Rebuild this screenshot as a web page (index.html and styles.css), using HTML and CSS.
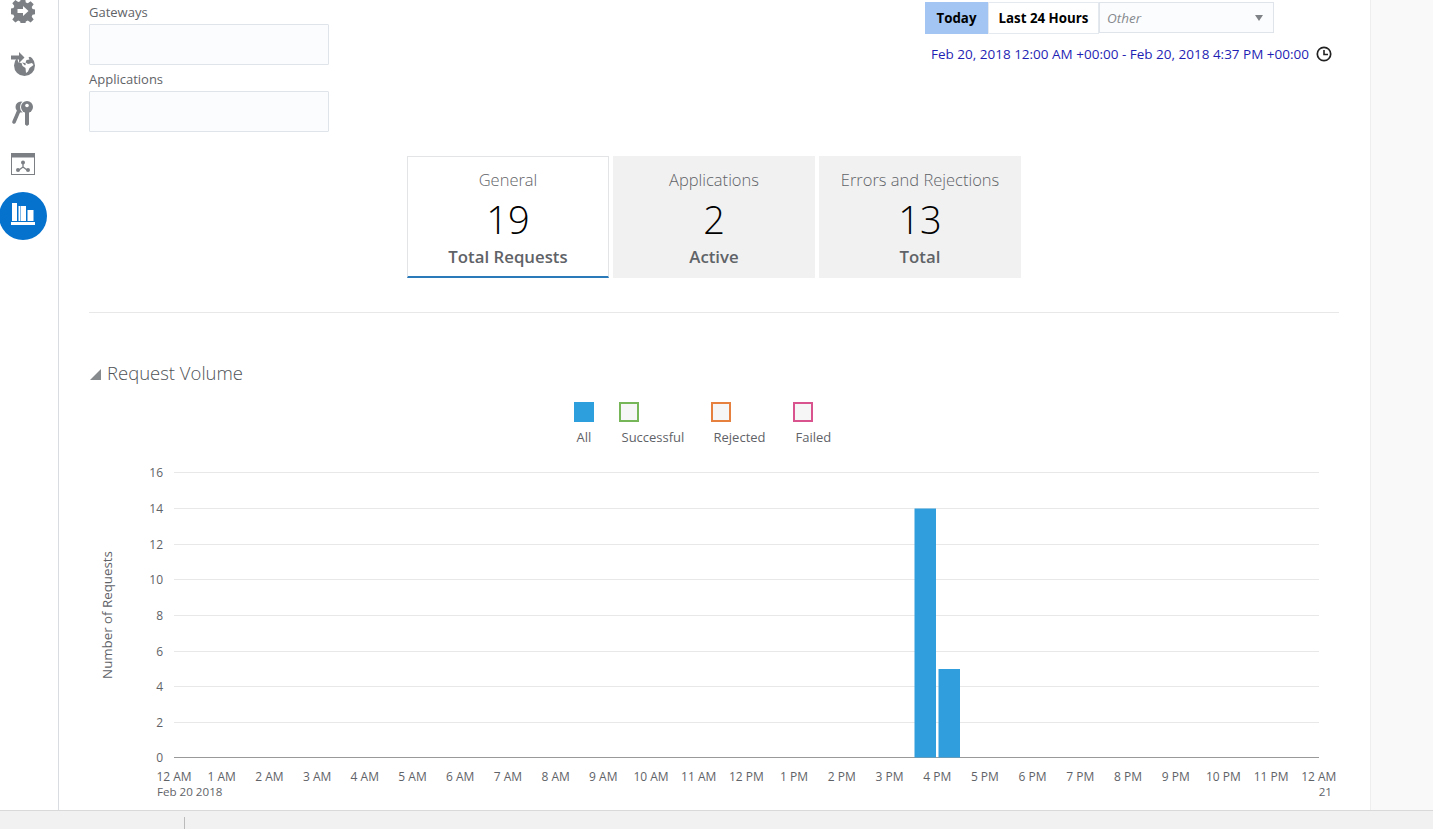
FILE: index.html
```html
<!DOCTYPE html>
<html lang="en">
<head>
    <meta charset="UTF-8">
    <meta name="viewport" content="width=device-width, initial-scale=1.0">
    <title>Analytics</title>
    <link rel="stylesheet" href="styles.css">
</head>
<body>
    <div class="shell">
        <nav class="side-nav">
            <svg class="nav-icon nav-gear" viewBox="0 0 24 24" width="24" height="24">
                <path fill="#7c8085" d="M9.800 0h4.400l.6 3.400 2 .8 2.800-2 3.100 3.100-2 2.800.8 2 3.400.6v4.400l-3.400.6-.8 2 2 2.800-3.100 3.100-2.800-2-2 .8-.6 3.400H9.800l-.6-3.400-2-.8-2.800 2-3.100-3.100 2-2.800-.8-2-3.400-.6V9.600l3.400-.6.8-2-2-2.800 3.100-3.100 2.800 2 2-.8z"/>
                <path fill="#fff" d="M6.500 10h5.500V7l5.500 5-5.500 5v-3H6.500z"/>
            </svg>
            <svg class="nav-icon nav-globe" viewBox="0 0 24 24" width="24" height="24">
                <circle cx="13.500" cy="13.500" r="10.500" fill="#7c8085"/>
                <path fill="#fff" d="M9 2h9l2 2-2.500 1.500 1 2-3 .5-1 2.500 2.500 1.500 4-1 1.500 2-4 3-1.500 3.500-2 1.500-.5-5-3-2-1-3-3-.5-1-3z"/>
                <path fill="#7c8085" d="M0 3.500h8V0l5.500 5.500L8 11V7.500H0z"/>
                <path fill="#7c8085" d="M11 10.500l3 .5 1 1-1 1.500z"/>
            </svg>
            <svg class="nav-icon nav-keys" viewBox="0 0 24 26" width="24" height="26">
                <path fill="none" stroke="#7c8085" stroke-width="3.600" stroke-linecap="round" d="M9 8 3 22"/>
                <circle cx="10" cy="7" r="5.500" fill="#7c8085"/>
                <circle cx="16" cy="7" r="7" fill="#fff"/>
                <circle cx="16" cy="7" r="6" fill="#7c8085"/>
                <circle cx="16" cy="5.500" r="1.800" fill="#fff"/>
                <path fill="#7c8085" d="M14 11h4v13.500l-2 1.500-2-1.500z"/>
            </svg>
            <svg class="nav-icon nav-app" viewBox="0 0 24 22" width="24" height="22">
                <rect x=".5" y=".5" width="23" height="21" fill="#fff" stroke="#7c8085"/>
                <rect x="0" y="0" width="24" height="4.500" fill="#7c8085"/>
                <path fill="none" stroke="#7c8085" stroke-width="1.300" d="M12 9v5M12 14l-4 3M12 14l4 3"/>
                <circle cx="12" cy="9.500" r="2" fill="#7c8085"/>
                <circle cx="7" cy="17" r="2" fill="#7c8085"/>
                <circle cx="17" cy="17" r="2" fill="#7c8085"/>
            </svg>
            <div class="nav-active">
                <svg viewBox="0 0 24 22" width="24" height="22">
                    <path fill="#fff" d="M0 19h24v3H0zM1 0h5v18H1zM7.500 3h2v15h-2zM10 3h5v15h-5zM16.500 7h6v11h-6z"/>
                </svg>
            </div>
        </nav>

        <main class="content">
            <div class="top-row">
                <div class="filters">
                    <label class="field-label">Gateways</label>
                    <div class="field-box"></div>
                    <label class="field-label">Applications</label>
                    <div class="field-box"></div>
                </div>
                <div class="range">
                    <div class="range-buttons">
                        <button class="range-btn range-btn-on">Today</button>
                        <button class="range-btn range-btn-wide">Last 24 Hours</button>
                        <div class="range-select">
                            <span>Other</span>
                            <span class="select-arrow"></span>
                        </div>
                    </div>
                    <div class="range-text">
                        <span>Feb 20, 2018 12:00 AM +00:00 - Feb 20, 2018 4:37 PM +00:00</span>
                        <svg viewBox="0 0 16 16" width="16" height="16">
                            <circle cx="8" cy="8" r="6.700" fill="none" stroke="#222" stroke-width="1.700"/>
                            <path fill="none" stroke="#222" stroke-width="1.600" d="M8 4v4.500h4"/>
                        </svg>
                    </div>
                </div>
            </div>

            <div class="tabs">
                <div class="tab tab-on">
                    <div class="tab-title">General</div>
                    <div class="tab-num">19</div>
                    <div class="tab-sub">Total Requests</div>
                </div>
                <div class="tab">
                    <div class="tab-title">Applications</div>
                    <div class="tab-num">2</div>
                    <div class="tab-sub">Active</div>
                </div>
                <div class="tab">
                    <div class="tab-title">Errors and Rejections</div>
                    <div class="tab-num">13</div>
                    <div class="tab-sub">Total</div>
                </div>
            </div>

            <hr class="divider">

            <h2 class="section-title"><span class="collapse-arrow"></span>Request Volume</h2>

            <div class="legend">
                <div class="legend-item item-all"><span class="swatch swatch-all"></span><span class="legend-label">All</span></div>
                <div class="legend-item item-ok"><span class="swatch swatch-ok"></span><span class="legend-label">Successful</span></div>
                <div class="legend-item item-rej"><span class="swatch swatch-rej"></span><span class="legend-label">Rejected</span></div>
                <div class="legend-item item-fail"><span class="swatch swatch-fail"></span><span class="legend-label">Failed</span></div>
            </div>

            <svg class="chart" id="chart" width="1260" height="345" viewBox="89 462 1260 345"></svg>
        </main>

        <div class="side-strip"></div>
    </div>

    <footer class="status-bar"><span class="status-tick"></span></footer>

    <script src="chart.js"></script>
</body>
</html>
```

FILE: styles.css
```css
* {
    box-sizing: border-box;
}

html, body {
    margin: 0;
    height: 829px;
    overflow: hidden;
}

body {
    display: flex;
    flex-direction: column;
    background-color: #fff;
    color: #5f6368;
    font-family: "Open Sans", "Noto Sans", sans-serif;
    font-size: 13px;
}

.shell {
    display: flex;
    height: 810px;
}

/* Left icon rail */
.side-nav {
    width: 59px;
    flex-shrink: 0;
    border-right: 1px solid #d9dce0;
    display: flex;
    flex-direction: column;
    align-items: center;
    padding-right: 12px;
}

.nav-icon {
    display: block;
    flex-shrink: 0;
}

.nav-gear {
    margin-top: -1px;
}

.nav-globe {
    margin-top: 29px;
}

.nav-keys {
    margin-top: 24px;
}

.nav-app {
    margin-top: 27px;
}

.nav-active {
    width: 48px;
    height: 48px;
    margin: 17px 0 0 0;
    padding-bottom: 4px;
    border-radius: 50%;
    background-color: #0572ce;
    display: flex;
    align-items: center;
    justify-content: center;
    flex-shrink: 0;
}

/* Main column */
.content {
    width: 1311px;
    flex-shrink: 0;
    padding: 0 31px 0 30px;
    display: flex;
    flex-direction: column;
}

.top-row {
    display: flex;
    justify-content: space-between;
    height: 156px;
}

.filters {
    width: 240px;
    padding-top: 3px;
}

.field-label {
    display: block;
    height: 21px;
    line-height: 19px;
    font-size: 13px;
}

.field-box {
    height: 41px;
    margin-bottom: 5px;
    border: 1px solid #dfe4ea;
    background-color: #fbfcfe;
    border-radius: 1px;
}

.range {
    width: 414px;
    padding-top: 2px;
}

.range-buttons {
    display: flex;
    height: 32px;
}

.range-btn {
    border: 1px solid #e4e9f0;
    background-color: #fff;
    color: #000;
    font-family: inherit;
    font-size: 13.300px;
    font-weight: 700;
    padding: 0;
    width: 63px;
}

.range-btn-on {
    background-color: #a2c5f3;
    border-color: #a2c5f3;
}

.range-btn-wide {
    width: 111px;
}

.range-select {
    width: 175px;
    height: 31px;
    padding: 0 10px 0 7px;
    border: 1px solid #dfe4ea;
    background-color: #fbfcfe;
    display: flex;
    align-items: center;
    justify-content: space-between;
    color: #868a8e;
    font-size: 13.500px;
    font-style: italic;
}

.select-arrow {
    width: 0;
    height: 0;
    border-left: 4px solid transparent;
    border-right: 4px solid transparent;
    border-top: 6px solid #7f8286;
}

.range-text {
    display: flex;
    align-items: center;
    gap: 7px;
    margin-top: 11px;
    padding-left: 6px;
    color: #1f1fb4;
    font-size: 13.500px;
    white-space: nowrap;
}

/* Summary tabs */
.tabs {
    display: flex;
    gap: 4px;
    margin-left: 318px;
}

.tab {
    width: 202px;
    height: 122px;
    background-color: #f1f1f1;
    text-align: center;
    padding-top: 12px;
}

.tab-on {
    background-color: #fff;
    border: 1px solid #e2e4e6;
    border-bottom: 2px solid #2a7ab9;
    padding-top: 11px;
}

.tab-title {
    font-size: 16.500px;
    font-weight: 300;
    line-height: 24px;
}

.tab-num {
    margin-top: 4px;
    font-size: 38px;
    font-weight: 300;
    line-height: 46px;
    color: #000;
}

.tab-sub {
    margin-top: 1px;
    font-size: 16.800px;
    font-weight: 600;
    line-height: 28px;
}

.divider {
    width: 100%;
    margin: 34px 0 0 0;
    border: 0;
    border-top: 1px solid #e8e8e8;
}

.section-title {
    margin: 47px 0 0 0;
    height: 26px;
    display: flex;
    align-items: center;
    font-size: 18.500px;
    font-weight: 300;
    line-height: 26px;
    color: #4f5357;
}

.collapse-arrow {
    width: 0;
    height: 0;
    margin: 3px 6px 0 1px;
    border-left: 11px solid transparent;
    border-bottom: 11px solid #888b8e;
}

/* Legend above chart */
.legend {
    display: flex;
    height: 60px;
    margin-top: 16px;
    padding-left: 485px;
    font-size: 13px;
}

.legend-item {
    display: flex;
    flex-direction: column;
    align-items: flex-start;
    gap: 5px;
    line-height: 20px;
}

.legend-label {
    padding-left: 2.500px;
}

.item-all {
    width: 45px;
}

.item-ok {
    width: 92px;
}

.item-rej {
    width: 82px;
}

.swatch {
    width: 20px;
    height: 20px;
    flex-shrink: 0;
    border: 2px solid;
    background-color: #f6f6f6;
}

.swatch-all {
    background-color: #2d9fdd;
    border-color: #2d9fdd;
}

.swatch-ok {
    border-color: #76b558;
}

.swatch-rej {
    border-color: #e5803e;
}

.swatch-fail {
    border-color: #d9548f;
}

.chart {
    display: block;
}

.chart text {
    font-family: "Open Sans", "Noto Sans", sans-serif;
    font-size: 12px;
    fill: #5f6368;
}

.chart .date-label {
    font-size: 11.600px;
}

.chart .axis-title {
    font-size: 13.300px;
}

.grid-line {
    stroke: #e8e8e8;
    stroke-width: 1;
}

.axis-line {
    stroke: #999;
    stroke-width: 1;
}

.bar {
    fill: #309edd;
}

/* Right hand strip + bottom bar */
.side-strip {
    flex: 1;
    background-color: #f9f9f9;
    border-left: 1px solid #eee;
}

.status-bar {
    height: 19px;
    position: relative;
    background-color: #f1f1f1;
    border-top: 1px solid #d9d9d9;
}

.status-tick {
    position: absolute;
    left: 184px;
    top: 6px;
    height: 12px;
    border-left: 1px solid #bbb;
}
```

FILE: chart.js
```js
var svgNS = "http://www.w3.org/2000/svg";
var chart = document.getElementById("chart");

function add(tag, attrs, text) {
    var el = document.createElementNS(svgNS, tag);
    for (var k in attrs) {
        el.setAttribute(k, attrs[k]);
    }
    if (text) {
        el.textContent = text;
    }
    chart.appendChild(el);
    return el;
}

// y axis
var gridY = [757, 722, 686, 651, 615, 579, 544, 508, 472];
for (var i = 0; i < gridY.length; i++) {
    add("line", {
        class: i === 0 ? "axis-line" : "grid-line",
        x1: 174, x2: 1319, y1: gridY[i] + 0.5, y2: gridY[i] + 0.5
    });
    add("text", { x: 163, y: gridY[i] + 4.5, "text-anchor": "end" }, String(i * 2));
}

// x axis
var hours = ["12 AM", "1 AM", "2 AM", "3 AM", "4 AM", "5 AM", "6 AM", "7 AM", "8 AM", "9 AM", "10 AM", "11 AM",
    "12 PM", "1 PM", "2 PM", "3 PM", "4 PM", "5 PM", "6 PM", "7 PM", "8 PM", "9 PM", "10 PM", "11 PM", "12 AM"];
for (var h = 0; h < hours.length; h++) {
    add("text", { x: 174 + h * 47.7, y: 781, "text-anchor": "middle" }, hours[h]);
}
add("text", { class: "date-label", x: 157, y: 796 }, "Feb 20 2018");
add("text", { class: "date-label", x: 1332, y: 796, "text-anchor": "end" }, "21");

add("text", {
    class: "axis-title", x: 0, y: 0, "text-anchor": "middle",
    transform: "translate(112 615) rotate(-90)"
}, "Number of Requests");

// bars
add("rect", { class: "bar", x: 914.5, y: 508.5, width: 21.5, height: 249 });
add("rect", { class: "bar", x: 938.5, y: 669, width: 21.5, height: 88.5 });
```
